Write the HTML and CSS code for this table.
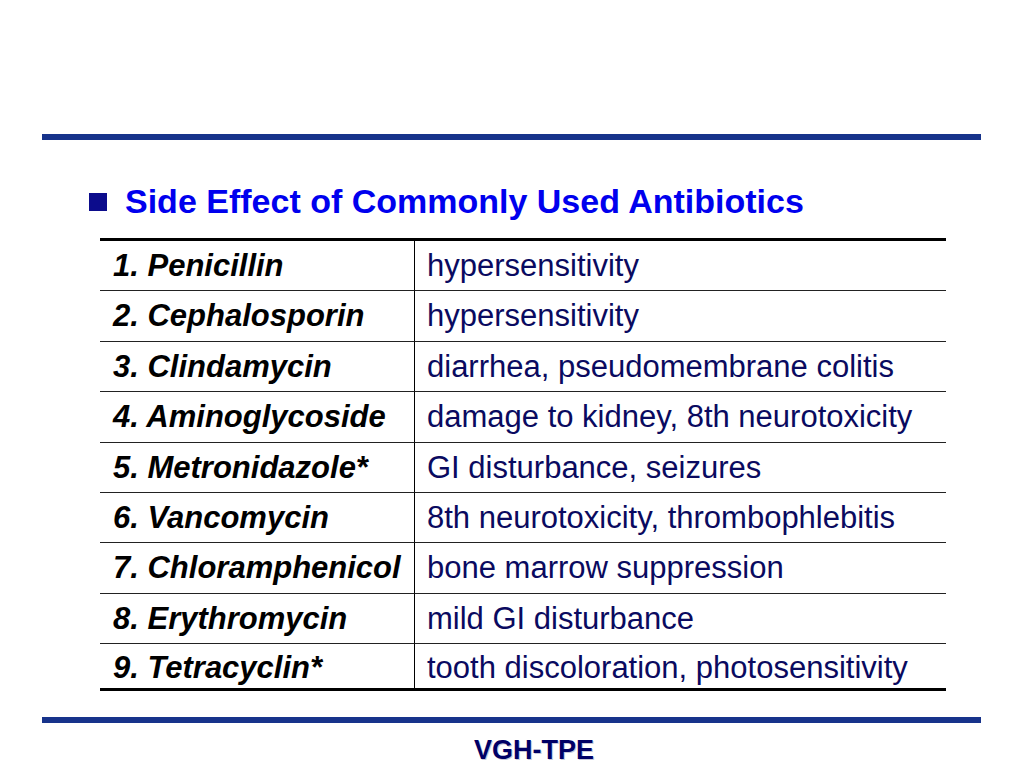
FILE: index.html
```html
<!DOCTYPE html>
<html lang="en">
<head>
<meta charset="utf-8">
<title>Side Effect of Commonly Used Antibiotics</title>
<link rel="stylesheet" href="styles.css">
</head>
<body>
<div class="slide">
  <div class="rule"></div>
  <div class="heading">
    <span class="bullet"></span>
    <h1 class="title">Side Effect of Commonly Used Antibiotics</h1>
  </div>
  <table class="drugs">
    <tbody>
      <tr><td class="drug">1. Penicillin</td><td class="effect">hypersensitivity</td></tr>
      <tr><td class="drug">2. Cephalosporin</td><td class="effect">hypersensitivity</td></tr>
      <tr><td class="drug">3. Clindamycin</td><td class="effect">diarrhea, pseudomembrane colitis</td></tr>
      <tr><td class="drug">4. Aminoglycoside</td><td class="effect">damage to kidney, 8th neurotoxicity</td></tr>
      <tr><td class="drug">5. Metronidazole*</td><td class="effect">GI disturbance, seizures</td></tr>
      <tr><td class="drug">6. Vancomycin</td><td class="effect">8th neurotoxicity, thrombophlebitis</td></tr>
      <tr><td class="drug">7. Chloramphenicol</td><td class="effect">bone marrow suppression</td></tr>
      <tr><td class="drug">8. Erythromycin</td><td class="effect">mild GI disturbance</td></tr>
      <tr class="last"><td class="drug">9. Tetracyclin*</td><td class="effect">tooth discoloration, photosensitivity</td></tr>
    </tbody>
  </table>
  <div class="rule rule-bottom"></div>
  <div class="footer">VGH-TPE</div>
</div>
</body>
</html>
```

FILE: styles.css
```css
html, body {
  margin: 0;
  padding: 0;
  background: #ffffff;
}

.slide {
  width: 1024px;
  height: 768px;
  box-sizing: border-box;
  padding-top: 134px;
  display: flex;
  flex-direction: column;
  font-family: "Liberation Sans", Arial, sans-serif;
  overflow: hidden;
}

.rule {
  height: 6px;
  margin: 0 43px 0 42px;
  background: #17338b;
  flex: none;
}

.heading {
  display: flex;
  align-items: center;
  margin-top: 42px;
  padding-left: 89px;
}

.bullet {
  width: 18px;
  height: 18px;
  background: #0c0c8c;
  margin-right: 18px;
  flex: none;
}

.title {
  margin: 0;
  font-size: 34px;
  line-height: 39px;
  font-weight: bold;
  color: #0000ee;
}

.drugs {
  margin: 17px 0 0 100px;
  width: 846px;
  border-collapse: separate;
  border-spacing: 0;
  border-top: 3px solid #000000;
  font-size: 31px;
}

.drugs td {
  padding: 0;
  line-height: 49.4px;
  border-bottom: 1px solid #222222;
  white-space: nowrap;
  vertical-align: middle;
}

.drugs .drug {
  width: 301px;
  padding-left: 13px;
  border-right: 1px solid #000000;
  font-weight: bold;
  font-style: italic;
  color: #000000;
}

.drugs .effect {
  padding-left: 12px;
  color: #0a0a60;
}

.drugs .last td {
  line-height: 41px;
  padding-top: 2.5px;
  border-bottom: 3px solid #000000;
}

.rule-bottom {
  margin-top: 26px;
}

.footer {
  margin-top: 12px;
  padding-left: 44px;
  text-align: center;
  font-size: 27px;
  line-height: 31px;
  font-weight: bold;
  color: #000066;
  text-shadow: 1px 1px 0 #c8c8d8;
}
```
